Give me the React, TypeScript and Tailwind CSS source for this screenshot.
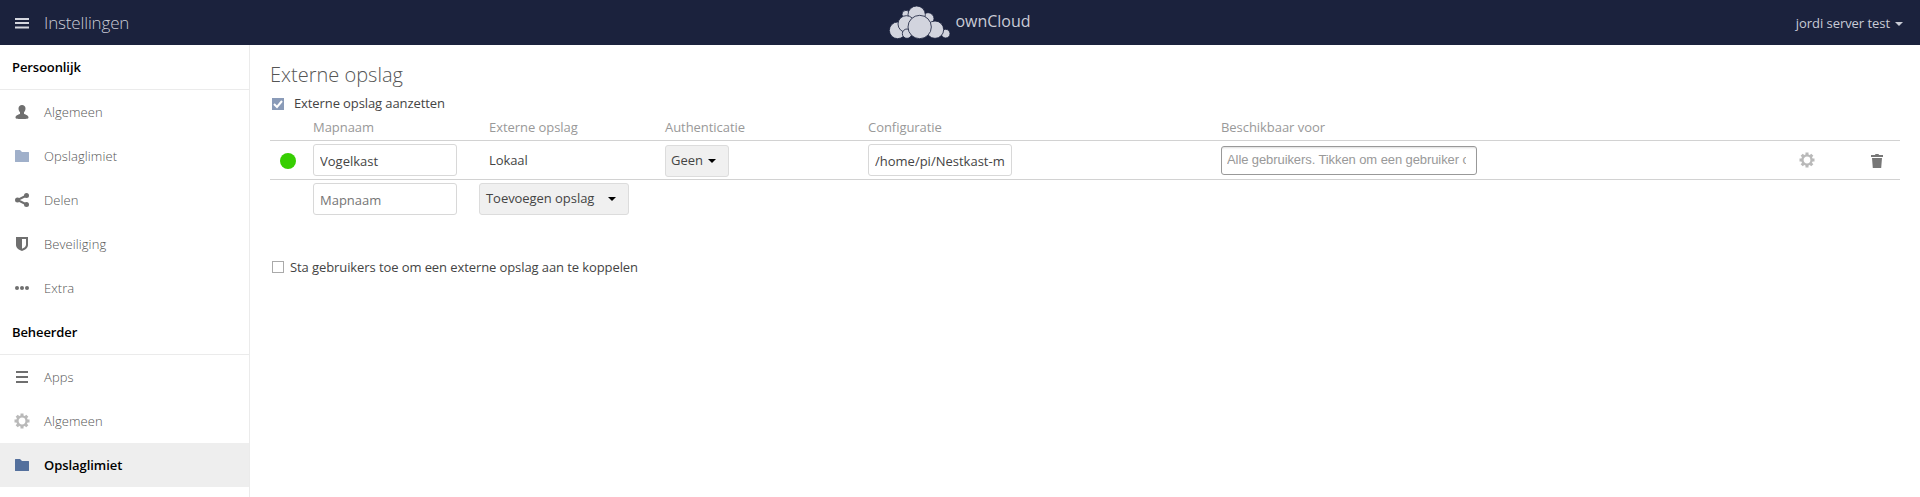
import React from 'react';

function Gear() {
  return (
    <svg className="block h-4 w-4 shrink-0" viewBox="0 0 16 16" fill="none" stroke="#b9b9b9">
      <circle cx="8" cy="8" r="4.600" strokeWidth="2.400" />
      <path
        d="M8 .5v2.500M8 13v2.500M.5 8H3M13 8h2.500M2.700 2.700l1.700 1.700M11.600 11.600l1.700 1.700M2.700 13.300l1.700-1.700M11.600 4.400l1.700-1.700"
        strokeWidth="3"
      />
    </svg>
  );
}

function Folder({ color }: { color: string }) {
  return (
    <svg className="block h-4 w-4 shrink-0" viewBox="0 0 16 16" fill={color}>
      <path d="M1.500 2h4.500l2 2h6.500q.5 0 .5.500v9q0 .5-.5.500h-13q-.5 0-.5-.5v-11q0-.5.500-.5z" />
    </svg>
  );
}

const icon = 'block h-4 w-4 shrink-0';

const icons: Record<string, React.ReactNode> = {
  user: (
    <svg className={icon} viewBox="0 0 16 16" fill="#6f6f6f">
      <path d="M8 1c-2 0-3.500 1.300-3.500 3.500 0 1.500.6 2.800 1.500 3.700v1.600c-.4.700-4.400 1.200-4.500 3.700 0 1 1 1.500 6.500 1.500s6.500-.5 6.500-1.500c-.1-2.500-4-3-4.500-3.700V8.200c.9-.9 1.500-2.200 1.500-3.700C11.500 2.300 10 1 8 1z" />
    </svg>
  ),
  folder: <Folder color="#a0b0ca" />,
  folderActive: <Folder color="#54709d" />,
  share: (
    <svg className={icon} viewBox="0 0 16 16" fill="#6f6f6f">
      <path d="M12.500 3.500L3.500 8l9 4.500" fill="none" stroke="#6f6f6f" strokeWidth="2" />
      <circle cx="12.500" cy="3.500" r="2.500" />
      <circle cx="3.500" cy="8" r="2.500" />
      <circle cx="12.500" cy="12.500" r="2.500" />
    </svg>
  ),
  shield: (
    <svg className={icon} viewBox="0 0 16 16" fill="#6f6f6f">
      <path
        fillRule="evenodd"
        d="M2 1h12v8c0 3-3 5-6 6-3-1-6-3-6-6zM8 3v9.800c2-.8 4-2 4-4V3z"
      />
    </svg>
  ),
  more: (
    <svg className={icon} viewBox="0 0 16 16" fill="#6f6f6f">
      <circle cx="3" cy="8" r="2" />
      <circle cx="8" cy="8" r="2" />
      <circle cx="13" cy="8" r="2" />
    </svg>
  ),
  list: (
    <svg className={icon} viewBox="0 0 16 16" fill="#6f6f6f">
      <path d="M2 2h12v2H2zM2 7h12v2H2zM2 12h12v2H2z" />
    </svg>
  ),
  gear: <Gear />,
};

function Heading({ children }: { children: React.ReactNode }) {
  return (
    <h2 className="h-[45px] border-b border-[#ebebeb] pl-3 text-[13px] leading-[45px] font-semibold tracking-[-0.1px] text-black">
      {children}
    </h2>
  );
}

function Item({ name, label, active }: { name: string; label: string; active?: boolean }) {
  return (
    <li
      className={
        active
          ? 'flex h-11 items-center gap-3.5 bg-[#eeeeee] pl-3.5 text-[13px] font-semibold tracking-[-0.06px] text-black'
          : 'flex h-11 items-center gap-3.5 pl-3.5 text-[13px] font-light tracking-[0.08px] text-[#555]'
      }
    >
      {icons[name]}
      <span className="pt-0.5">{label}</span>
    </li>
  );
}

function Caret() {
  return (
    <svg className="block h-1 w-2" viewBox="0 0 8 4" fill="#000">
      <path d="M0 0h8L4 4z" />
    </svg>
  );
}

function Logo() {
  return (
    <svg className="block h-[35px] w-[62px]" viewBox="88 14 186 105" fill="#d2d4de" stroke="#1b223d" strokeWidth="2.500">
      <circle cx="139" cy="42" r="12" />
      <circle cx="205" cy="55" r="18" />
      <circle cx="171" cy="43" r="26" />
      <circle cx="114" cy="90" r="25" />
      <circle cx="140" cy="71" r="25" />
      <circle cx="142" cy="100" r="14" />
      <circle cx="258" cy="100" r="13" />
      <circle cx="226" cy="88" r="26" />
      <circle cx="180" cy="80" r="35" />
    </svg>
  );
}

const field =
  'block h-8 w-36 rounded-[3px] border border-[#d8d8d8] bg-white px-[6px] pt-0.5 text-[13px] text-[#444] outline-none placeholder:text-[#757575]';
const columns = 'grid grid-cols-[43px_166px_186px_203px_353px_578px_70px_31px]';

export default function App() {
  return (
    <div className="flex h-[497px] flex-col overflow-hidden bg-white font-['Open_Sans',sans-serif] text-[13px] text-[#444]">
      <header className="grid h-[45px] shrink-0 grid-cols-[1fr_auto_1fr] items-center bg-[#1b223d] text-[#c9cbd6]">
        <div className="flex items-center gap-3.5 pl-3.5">
          <svg className="block h-4 w-4" viewBox="0 0 16 16" fill="#d5d7df">
            <path d="M1 3h14v2H1zM1 7h14v2H1zM1 11.500h14v2H1z" />
          </svg>
          <span className="text-[17px] leading-[45px] font-light tracking-[-0.15px]">Instellingen</span>
        </div>
        <div className="flex items-center gap-1">
          <Logo />
          <span className="pb-1 text-[16px]">ownCloud</span>
        </div>
        <div className="flex items-center justify-end gap-[5px] pt-0.5 pr-[17px]">
          <span className="tracking-[-0.05px]">jordi server test</span>
          <svg className="block h-1 w-2" viewBox="0 0 8 4" fill="#c9cbd6">
            <path d="M0 0h8L4 4z" />
          </svg>
        </div>
      </header>

      <div className="flex min-h-0 flex-1">
        <nav className="w-[250px] shrink-0 border-r border-[#ebebeb]">
          <Heading>Persoonlijk</Heading>
          <ul>
            <Item name="user" label="Algemeen" />
            <Item name="folder" label="Opslaglimiet" />
            <Item name="share" label="Delen" />
            <Item name="shield" label="Beveiliging" />
            <Item name="more" label="Extra" />
          </ul>
          <Heading>Beheerder</Heading>
          <ul>
            <Item name="list" label="Apps" />
            <Item name="gear" label="Algemeen" />
            <Item name="folderActive" label="Opslaglimiet" active />
          </ul>
        </nav>

        <main className="flex-1 pt-4 pr-5 pl-5">
          <h1 className="h-7 text-[20px] leading-7 font-light text-[#555]">Externe opslag</h1>
          <label className="mt-[3px] mb-px flex h-6 items-center gap-2.5 pl-0.5">
            <svg className="block h-3 w-3 shrink-0 overflow-visible" viewBox="0 0 12 12">
              <path d="M0 0h12v12H0z" fill="#8a9bb8" />
              <path d="M2 6l3 3 5-6" fill="none" stroke="#fff" strokeWidth="2" />
            </svg>
            <span className="tracking-[-0.1px]">Externe opslag aanzetten</span>
          </label>

          <div className={`${columns} h-6 border-b border-[#d2d2d2] leading-5 tracking-[-0.05px] text-[#999]`}>
            <span />
            <span>Mapnaam</span>
            <span className="pl-2.5">Externe opslag</span>
            <span>Authenticatie</span>
            <span>Configuratie</span>
            <span>Beschikbaar voor</span>
          </div>
          <div className={`${columns} h-[39px] items-center border-b border-[#d2d2d2]`}>
            <span className="mt-px ml-2.5 h-4 w-4 rounded-full bg-[#37ce02]" />
            <input className={field} defaultValue="Vogelkast" />
            <span className="pt-px pl-2.5 tracking-[-0.1px]">Lokaal</span>
            <button className="mt-px flex h-8 w-16 items-center gap-[5px] rounded-[3px] border border-[#dcdcdc] bg-[#f0f0f0] pl-[5px]">
              Geen <Caret />
            </button>
            <input className={field} defaultValue="/home/pi/Nestkast-master" />
            <div className="flex h-[29px] w-64 items-center rounded-[3px] border border-[#999] bg-white pr-2.5 pl-[5px] font-['Liberation_Sans',Arial,sans-serif] tracking-[-0.09px] text-[#999] shadow-[inset_0_2px_2px_-1px_#ddd]">
              <span className="overflow-hidden whitespace-nowrap">Alle gebruikers. Tikken om een gebruiker of groep</span>
            </div>
            <Gear />
            <svg className="mt-0.5 block h-4 w-4" viewBox="0 0 16 16" fill="#777">
              <path d="M6.500 1h3l.5 1h4v2H2V2h4zM3 5h10l-.8 10H3.800z" />
            </svg>
          </div>
          <div className={`${columns} h-[39px] items-center pb-px`}>
            <span />
            <input className={field} placeholder="Mapnaam" />
            <button className="flex h-8 w-[150px] items-center justify-between rounded-[3px] border border-[#dcdcdc] bg-[#f0f0f0] pr-3 pl-1.5 tracking-[-0.05px]">
              Toevoegen opslag <Caret />
            </button>
          </div>

          <label className="mt-9 flex h-6 items-center gap-1.5 pl-0.5">
            <span className="h-3 w-3 shrink-0 border border-[#aaa]" />
            <span className="pt-0.5 tracking-[-0.09px]">Sta gebruikers toe om een externe opslag aan te koppelen</span>
          </label>
        </main>
      </div>
    </div>
  );
}
